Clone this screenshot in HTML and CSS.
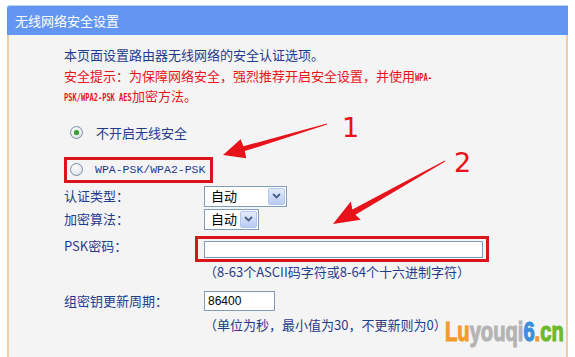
FILE: index.html
```html
<!DOCTYPE html>
<html>

<head>
    <meta charset="utf-8">
    <meta name="viewport" content="width=device-width, initial-scale=1">
    <title>无线网络安全设置</title>
    <link rel="stylesheet" href="styles.css">
</head>

<body>
    <div class="panel">
        <div class="panel-head">无线网络安全设置</div>
        <div class="panel-body">
            <p class="intro">本页面设置路由器无线网络的安全认证选项。</p>
            <p class="warn">安全提示：为保障网络安全，强烈推荐开启安全设置，并使用<span class="latin short">WPA-</span><br><span class="latin long">PSK/WPA2-PSK AES</span>加密方法。</p>

            <div class="radio-row first">
                <span class="radio checked"></span>
                <span class="radio-text">不开启无线安全</span>
            </div>
            <div class="radio-row marked">
                <span class="radio"></span>
                <span class="radio-text mono">WPA-PSK/WPA2-PSK</span>
            </div>

            <div class="row r-auth">
                <span class="label">认证类型：</span>
                <span class="select wide">
                    <span class="select-val">自动</span>
                    <span class="select-btn">
                        <svg width="9" height="6" viewBox="0 0 9 6"><path d="M1 1 L4.5 4.5 L8 1" fill="none" stroke="#4a5f86" stroke-width="1.8"/></svg>
                    </span>
                </span>
            </div>
            <div class="row r-enc">
                <span class="label">加密算法：</span>
                <span class="select narrow">
                    <span class="select-val">自动</span>
                    <span class="select-btn">
                        <svg width="9" height="6" viewBox="0 0 9 6"><path d="M1 1 L4.5 4.5 L8 1" fill="none" stroke="#4a5f86" stroke-width="1.8"/></svg>
                    </span>
                </span>
            </div>
            <div class="row r-psk">
                <span class="label up">PSK密码：</span>
                <span class="mark-box"><input class="text-in psk" type="text" value=""></span>
            </div>
            <div class="hint h-psk">（8-63个ASCII码字符或8-64个十六进制字符）</div>
            <div class="row r-group">
                <span class="label">组密钥更新周期：</span>
                <input class="text-in period" type="text" value="86400">
            </div>
            <div class="hint h-group">（单位为秒，最小值为30，不更新则为0）</div>
        </div>
    </div>

    <svg class="marks" width="575" height="357" viewBox="0 0 575 357">
        <polygon points="326.9,123.5 243.4,146.3 240.6,139.3 223,155 246.2,158.2 244.8,151.1 327.1,124.5" fill="#e8121a"/>
        <polygon points="444.8,160.6 352.4,209.6 350.8,201.6 333,224 360.8,219.8 355.4,214.8 445.2,161.4" fill="#e8121a"/>
        <text x="342" y="137" class="mark-num">1</text>
        <text x="454" y="172" class="mark-num">2</text>
    </svg>

    <div class="watermark"><span class="wm-o">Lu</span><span class="wm-g">youqi</span><span class="wm-b">6</span><span class="wm-o">.</span><span class="wm-n">cn</span></div>
</body>

</html>
```

FILE: styles.css
```css
* {
    box-sizing: border-box;
}

body {
    margin: 0;
    height: 357px;
    overflow: hidden;
    position: relative;
    background: #fff;
    color: #1f3c8e;
    font-family: "Noto Sans CJK SC", sans-serif;
    font-size: 13px;
}

.panel {
    margin: 5px 7px 0 7px;
}

.panel-head {
    height: 30px;
    line-height: 29px;
    padding-left: 8px;
    background: #6396f3;
    color: #fff;
    border-top: 1px solid #bccff3;
    border-radius: 3px 0 0 0;
}

.panel-body {
    height: 330px;
    padding: 10px 0 0 55px;
    background: #f4f4f4;
    border-left: 2px solid #f2cca6;
    border-right: 2px solid #f2cca6;
}

.intro,
.warn {
    margin: 0;
    line-height: 20.5px;
}

.warn {
    color: #e8141a;
}

/* narrow bitmap-like latin inside the red notice */
.latin {
    display: inline-block;
    line-height: 10px;
    font-family: "DejaVu Sans Mono", monospace;
    font-size: 11px;
    font-weight: bold;
    transform: scaleX(0.64);
    transform-origin: left center;
}

.latin.short {
    margin-right: -9px;
}

.latin.long {
    margin-right: -38px;
}

.radio-row {
    display: flex;
    align-items: center;
    height: 26px;
    line-height: 16px;
}

.radio-row.first {
    margin-top: 13px;
    padding-left: 6px;
}

.radio-row.marked {
    margin-top: 11px;
    width: 149px;
    padding-left: 3px;
    border: 3px solid #d9141b;
}

.radio {
    width: 13px;
    height: 13px;
    border-radius: 50%;
    border: 1px solid #7b8ea8;
    background: radial-gradient(circle at 40% 35%, #fff 0%, #e9ecef 55%, #cfd5dc 100%);
    position: relative;
}

.radio.checked::after {
    content: "";
    position: absolute;
    left: 3px;
    top: 3px;
    width: 5px;
    height: 5px;
    border-radius: 50%;
    background: #3a9d35;
    box-shadow: 0 0 1px #6fcf68;
}

.radio-text {
    margin-left: 13px;
}

.radio-text.mono {
    margin-left: 12px;
    font-family: "Liberation Mono", monospace;
    font-size: 11.5px;
}

.row {
    display: flex;
    align-items: center;
    line-height: 16px;
}

.label {
    width: 140px;
    flex: none;
}

.label.up {
    margin-top: -5px;
}

.r-auth {
    margin-top: 3px;
}

.r-enc {
    margin-top: 2px;
}

.r-psk {
    margin-top: 6px;
}

.r-group {
    margin-top: 11px;
}

.select {
    display: flex;
    align-items: center;
    justify-content: space-between;
    height: 21px;
    padding: 1px;
    background: #fff;
    border: 1px solid #7f9db9;
    color: #000;
}

.select.wide {
    width: 83px;
}

.select.narrow {
    width: 55px;
}

.select-val {
    padding-left: 5px;
}

.select-btn {
    display: flex;
    align-items: center;
    justify-content: center;
    width: 17px;
    height: 17px;
    border: 1px solid #b3c5ea;
    border-radius: 2px;
    background: linear-gradient(#e3ebfc, #b9cbf2);
}

.mark-box {
    margin-left: -9px;
    padding: 2px 3px 1px 6px;
    border: 3px solid #d9141b;
}

.text-in {
    display: block;
    margin: 0;
    padding: 0 3px;
    border: 1px solid #7f9db9;
    background: #fff;
    color: #000;
    font-family: "Liberation Sans", sans-serif;
    font-size: 12px;
}

.text-in.psk {
    width: 279px;
    height: 17px;
}

.text-in.period {
    width: 71px;
    height: 20px;
}

.hint {
    margin-left: 140px;
    line-height: 16px;
}

.h-psk {
    margin-top: 2px;
}

.h-group {
    margin-top: 6px;
}

.marks {
    position: absolute;
    left: 0;
    top: 0;
    pointer-events: none;
}

.mark-num {
    fill: #e8121a;
    font-family: "DejaVu Sans", sans-serif;
    font-size: 27px;
}

.watermark {
    position: absolute;
    left: 445px;
    top: 316px;
    font-family: "Liberation Sans", sans-serif;
    font-weight: bold;
    font-size: 28px;
    line-height: 32px;
    white-space: nowrap;
    -webkit-text-stroke: 1.2px currentColor;
    transform: scaleX(0.72);
    transform-origin: left top;
}

.wm-o {
    color: #f39a2c;
}

.wm-g {
    color: #b4b4b4;
}

.wm-b {
    color: #3b8fd9;
}

.wm-n {
    color: #6cb92b;
}
```
